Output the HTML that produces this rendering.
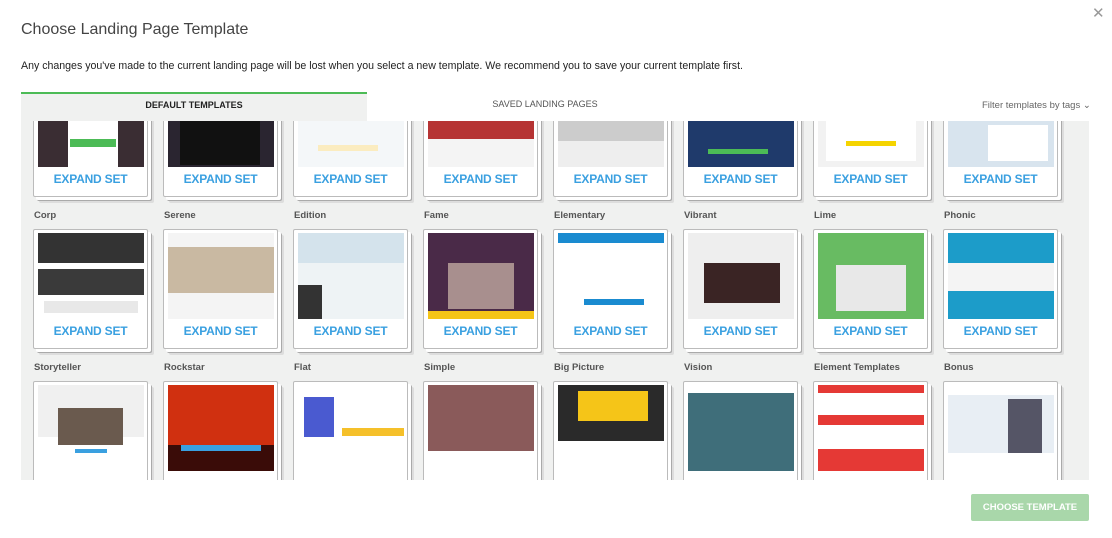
<!DOCTYPE html><html><head><style>
*{box-sizing:border-box;margin:0;padding:0}
body{width:1112px;height:538px;background:#fff;font-family:"Liberation Sans",sans-serif;position:relative;overflow:hidden;color:#333}
.t{position:absolute;left:21px;top:21px;font-size:16px;color:#444}
.d{position:absolute;left:21px;top:60px;font-size:10.6px;color:#222}
.x{position:absolute;left:1092px;top:4px;font-size:15px;color:#999}
.tab1{position:absolute;left:21px;top:92px;width:346px;height:29px;background:#f0f1f0;border-top:2px solid #4cbb56;font-size:9px;font-weight:bold;text-align:center;line-height:22px;color:#222}
.tab2{position:absolute;left:367px;top:92px;width:356px;height:29px;font-size:9px;text-align:center;line-height:24px;color:#555}
.flt{position:absolute;left:982px;top:100px;font-size:9.5px;color:#666}
.panel{position:absolute;left:21px;top:121px;width:1068px;height:359px;background:#f0f1f0;overflow:hidden}
.card{position:absolute;width:115px;background:#fff;border:1px solid #bbb;border-radius:2px;box-shadow:3px 3px 0 #fff,4px 4px 0 #aaa,6px 6px 0 #ddd}
.img{position:absolute;left:4px;top:3px;width:106px;height:86px;overflow:hidden}
.exp{position:absolute;left:0;width:100%;text-align:center;color:#3aa0e0;font-weight:bold;font-size:12px;top:94px;letter-spacing:-0.2px}
.lb{position:absolute;font-size:9.5px;color:#555;font-weight:bold}
.cb{position:absolute;left:971px;top:494px;width:118px;height:27px;background:#a9d7aa;color:#fff;font-size:9.5px;font-weight:bold;text-align:center;line-height:27px;border-radius:2px}
</style></head><body>
<div class="t">Choose Landing Page Template</div>
<div class="d">Any changes you've made to the current landing page will be lost when you select a new template. We recommend you to save your current template first.</div>
<div class="x">✕</div>
<div class="tab1">DEFAULT TEMPLATES</div>
<div class="tab2">SAVED LANDING PAGES</div>
<div class="flt">Filter templates by tags ⌄</div>
<div class="panel">
<div class="card" style="left:12px;top:-44px;height:120px"><div class="img" style="background:#3a2d33"><div style="position:absolute;left:30px;top:0;width:50px;height:86px;background:#fff"></div><div style="position:absolute;left:32px;top:58px;width:46px;height:8px;background:#4cbb56"></div></div><div class="exp">EXPAND SET</div></div>
<div class="card" style="left:142px;top:-44px;height:120px"><div class="img" style="background:#2a2530"><div style="position:absolute;left:12px;top:40px;width:80px;height:44px;background:#111"></div></div><div class="exp">EXPAND SET</div></div>
<div class="card" style="left:272px;top:-44px;height:120px"><div class="img" style="background:#f4f7f9"><div style="position:absolute;left:20px;top:64px;width:60px;height:6px;background:#fbecc0"></div></div><div class="exp">EXPAND SET</div></div>
<div class="card" style="left:402px;top:-44px;height:120px"><div class="img" style="background:#f4f4f4"><div style="position:absolute;left:0;top:0;width:106px;height:58px;background:#b63434"></div></div><div class="exp">EXPAND SET</div></div>
<div class="card" style="left:532px;top:-44px;height:120px"><div class="img" style="background:#eee"><div style="position:absolute;left:0;top:0;width:106px;height:60px;background:#ccc"></div></div><div class="exp">EXPAND SET</div></div>
<div class="card" style="left:662px;top:-44px;height:120px"><div class="img" style="background:#1f3a6b"><div style="position:absolute;left:20px;top:68px;width:60px;height:5px;background:#4cbb56"></div></div><div class="exp">EXPAND SET</div></div>
<div class="card" style="left:792px;top:-44px;height:120px"><div class="img" style="background:#f2f2f2"><div style="position:absolute;left:8px;top:0;width:90px;height:80px;background:#fff"></div><div style="position:absolute;left:28px;top:60px;width:50px;height:5px;background:#f5d400"></div></div><div class="exp">EXPAND SET</div></div>
<div class="card" style="left:922px;top:-44px;height:120px"><div class="img" style="background:#d8e4ee"><div style="position:absolute;left:40px;top:44px;width:60px;height:36px;background:#fff"></div></div><div class="exp">EXPAND SET</div></div>
<div class="lb" style="left:13px;top:89px">Corp</div><div class="lb" style="left:143px;top:89px">Serene</div><div class="lb" style="left:273px;top:89px">Edition</div><div class="lb" style="left:403px;top:89px">Fame</div><div class="lb" style="left:533px;top:89px">Elementary</div><div class="lb" style="left:663px;top:89px">Vibrant</div><div class="lb" style="left:793px;top:89px">Lime</div><div class="lb" style="left:923px;top:89px">Phonic</div>
<div class="card" style="left:12px;top:108px;height:120px"><div class="img" style="background:#fff"><div style="position:absolute;left:0;top:0;width:106px;height:30px;background:#333"></div><div style="position:absolute;left:0;top:36px;width:106px;height:26px;background:#3a3a3a"></div><div style="position:absolute;left:6px;top:68px;width:94px;height:12px;background:#e8e8e8"></div></div><div class="exp">EXPAND SET</div></div>
<div class="card" style="left:142px;top:108px;height:120px"><div class="img" style="background:#f4f4f4"><div style="position:absolute;left:0;top:14px;width:106px;height:46px;background:#c9b9a2"></div></div><div class="exp">EXPAND SET</div></div>
<div class="card" style="left:272px;top:108px;height:120px"><div class="img" style="background:#d4e3ec"><div style="position:absolute;left:0;top:30px;width:106px;height:56px;background:#eef3f5"></div><div style="position:absolute;left:0;top:52px;width:24px;height:34px;background:#333"></div></div><div class="exp">EXPAND SET</div></div>
<div class="card" style="left:402px;top:108px;height:120px"><div class="img" style="background:#4a2a48"><div style="position:absolute;left:20px;top:30px;width:66px;height:46px;background:#a88f8e"></div><div style="position:absolute;left:0;top:78px;width:106px;height:8px;background:#f5c518"></div></div><div class="exp">EXPAND SET</div></div>
<div class="card" style="left:532px;top:108px;height:120px"><div class="img" style="background:#fff"><div style="position:absolute;left:0;top:0;width:106px;height:10px;background:#1a8bd0"></div><div style="position:absolute;left:26px;top:66px;width:60px;height:6px;background:#1a8bd0"></div></div><div class="exp">EXPAND SET</div></div>
<div class="card" style="left:662px;top:108px;height:120px"><div class="img" style="background:#eee"><div style="position:absolute;left:16px;top:30px;width:76px;height:40px;background:#3a2424"></div></div><div class="exp">EXPAND SET</div></div>
<div class="card" style="left:792px;top:108px;height:120px"><div class="img" style="background:#68bb62"><div style="position:absolute;left:18px;top:32px;width:70px;height:46px;background:#e8e8e8"></div></div><div class="exp">EXPAND SET</div></div>
<div class="card" style="left:922px;top:108px;height:120px"><div class="img" style="background:#1c9cc9"><div style="position:absolute;left:0;top:30px;width:106px;height:28px;background:#f4f4f4"></div></div><div class="exp">EXPAND SET</div></div>
<div class="lb" style="left:13px;top:241px">Storyteller</div><div class="lb" style="left:143px;top:241px">Rockstar</div><div class="lb" style="left:273px;top:241px">Flat</div><div class="lb" style="left:403px;top:241px">Simple</div><div class="lb" style="left:533px;top:241px">Big Picture</div><div class="lb" style="left:663px;top:241px">Vision</div><div class="lb" style="left:793px;top:241px">Element Templates</div><div class="lb" style="left:923px;top:241px">Bonus</div>
<div class="card" style="left:12px;top:260px;height:120px"><div class="img" style="background:#fff"><div style="position:absolute;left:0;top:0;width:106px;height:52px;background:#f0f0f0"></div><div style="position:absolute;left:20px;top:23px;width:65px;height:37px;background:#6a5a4e"></div><div style="position:absolute;left:37px;top:64px;width:32px;height:4px;background:#3aa0e0"></div></div></div>
<div class="card" style="left:142px;top:260px;height:120px"><div class="img" style="background:#d03010"><div style="position:absolute;left:0;top:60px;width:106px;height:26px;background:#3a0c08"></div><div style="position:absolute;left:13px;top:60px;width:80px;height:6px;background:#3aa0e0"></div></div></div>
<div class="card" style="left:272px;top:260px;height:120px"><div class="img" style="background:#fff"><div style="position:absolute;left:6px;top:12px;width:30px;height:40px;background:#4a5ad0"></div><div style="position:absolute;left:44px;top:43px;width:62px;height:8px;background:#f5c02a"></div></div></div>
<div class="card" style="left:402px;top:260px;height:120px"><div class="img" style="background:#fff"><div style="position:absolute;left:0;top:0;width:106px;height:66px;background:#8a5a5a"></div></div></div>
<div class="card" style="left:532px;top:260px;height:120px"><div class="img" style="background:#fff"><div style="position:absolute;left:0;top:0;width:106px;height:56px;background:#2a2a2a"></div><div style="position:absolute;left:20px;top:6px;width:70px;height:30px;background:#f5c518"></div></div></div>
<div class="card" style="left:662px;top:260px;height:120px"><div class="img" style="background:#3f6e7a"><div style="position:absolute;left:0;top:0;width:106px;height:8px;background:#fff"></div></div></div>
<div class="card" style="left:792px;top:260px;height:120px"><div class="img" style="background:#fff"><div style="position:absolute;left:0;top:0;width:106px;height:8px;background:#e53935"></div><div style="position:absolute;left:0;top:30px;width:106px;height:10px;background:#e53935"></div><div style="position:absolute;left:0;top:64px;width:106px;height:22px;background:#e53935"></div></div></div>
<div class="card" style="left:922px;top:260px;height:120px"><div class="img" style="background:#fff"><div style="position:absolute;left:0;top:10px;width:106px;height:58px;background:#e8eef4"></div><div style="position:absolute;left:60px;top:14px;width:34px;height:54px;background:#556"></div></div></div>
</div>
<div class="cb">CHOOSE TEMPLATE</div>
</body></html>
